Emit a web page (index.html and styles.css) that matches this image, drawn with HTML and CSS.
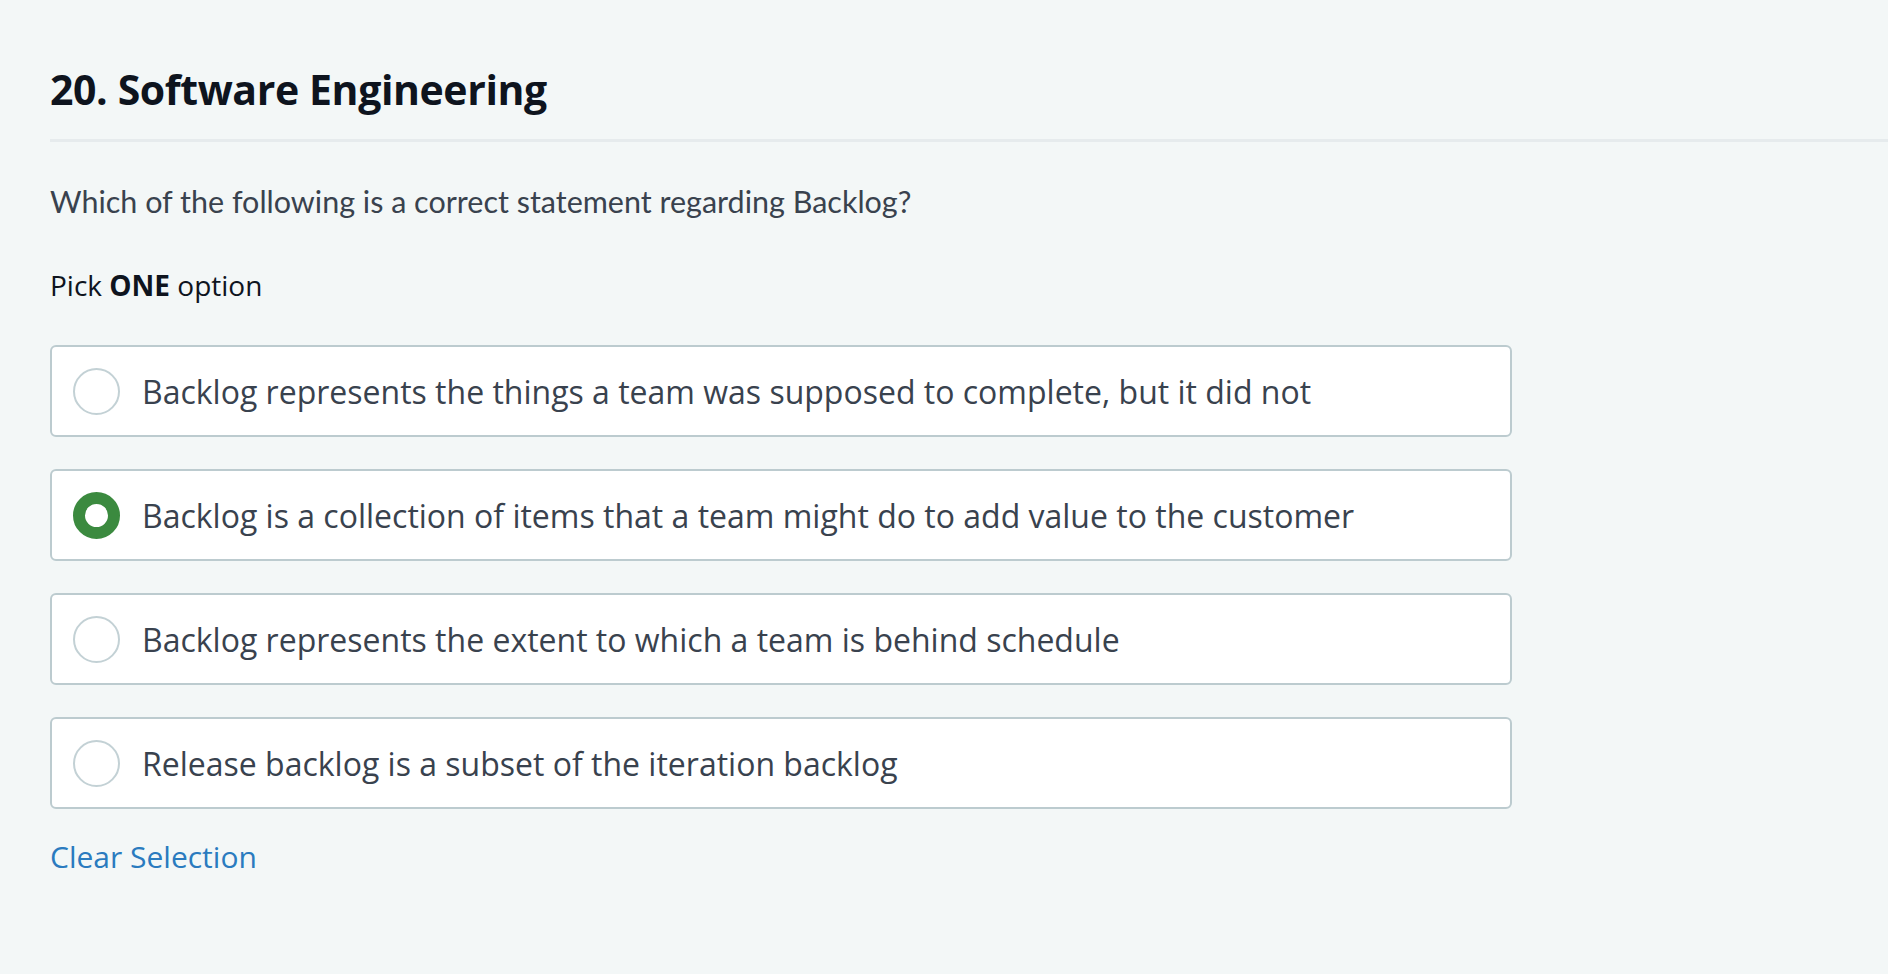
FILE: index.html
```html
<!DOCTYPE html>
<html>
<head>
<meta charset="utf-8">
<link rel="stylesheet" href="styles.css">
</head>
<body>
<main class="question">
  <h1 class="title">20. Software Engineering</h1>
  <p class="prompt">Which of the following is a correct statement regarding Backlog?</p>
  <p class="pick">Pick <strong>ONE</strong> option</p>
  <div class="options">
    <label class="option"><span class="radio"></span><span class="label">Backlog represents the things a team was supposed to complete, but it did not</span></label>
    <label class="option"><span class="radio checked"></span><span class="label">Backlog is a collection of items that a team might do to add value to the customer</span></label>
    <label class="option"><span class="radio"></span><span class="label">Backlog represents the extent to which a team is behind schedule</span></label>
    <label class="option"><span class="radio"></span><span class="label">Release backlog is a subset of the iteration backlog</span></label>
  </div>
  <a class="clear" href="#">Clear Selection</a>
</main>
</body>
</html>
```

FILE: styles.css
```css
html, body {
  margin: 0;
  padding: 0;
  background: #f3f7f7;
}
body {
  font-family: "Open Sans", "Liberation Sans", sans-serif;
  color: #39424e;
}
.question {
  padding: 60px 0 0 50px;
}
.title {
  margin: 0;
  font-size: 41px;
  line-height: 58px;
  font-weight: 700;
  color: #0e141e;
  padding-bottom: 21px;
  border-bottom: 3px solid #e6ebed;
  letter-spacing: -0.4px;
}
.prompt {
  margin: 37px 0 0;
  font-family: Lato, "Open Sans", sans-serif;
  font-size: 30.5px;
  line-height: 44px;
  color: #39424e;
}
.pick {
  margin: 42px 0 0;
  font-size: 28px;
  line-height: 40px;
  color: #0e141e;
}
.pick strong {
  font-weight: 700;
}
.options {
  margin-top: 40px;
  width: 1462px;
  display: flex;
  flex-direction: column;
  gap: 32px;
}
.option {
  display: flex;
  align-items: center;
  height: 92px;
  box-sizing: border-box;
  background: #ffffff;
  border: 2px solid #bccbcf;
  border-radius: 6px;
  padding-left: 21px;
}
.radio {
  width: 47px;
  height: 47px;
  box-sizing: border-box;
  border-radius: 50%;
  border: 2px solid #c3d1d5;
  background: #fff;
  flex: none;
}
.radio.checked {
  border: 12px solid #3b8a3f;
}
.label {
  margin-left: 22px;
  font-size: 32px;
  color: #39424e;
}
.clear {
  display: inline-block;
  margin-top: 27px;
  font-size: 30px;
  color: #2a7bbf;
  text-decoration: none;
}
```
